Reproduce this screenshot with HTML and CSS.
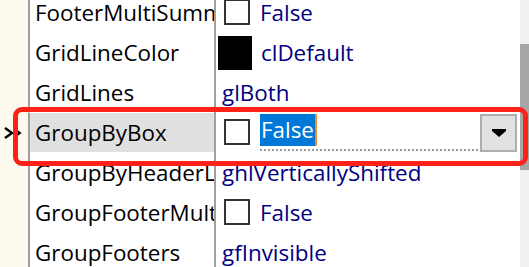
FILE: index.html
```html
<!DOCTYPE html>
<html>
<head>
<meta charset="utf-8">
<link rel="stylesheet" href="styles.css">
</head>
<body>
<div class="inspector">
  <div class="grid">
    <div class="row">
      <div class="gutter"></div>
      <div class="name"><span class="label">FooterMultiSummaries</span></div>
      <div class="value"><span class="check"></span><span class="text">False</span></div>
    </div>
    <div class="row">
      <div class="gutter"></div>
      <div class="name"><span class="label">GridLineColor</span></div>
      <div class="value"><span class="swatch"></span><span class="text">clDefault</span></div>
    </div>
    <div class="row">
      <div class="gutter"></div>
      <div class="name"><span class="label">GridLines</span></div>
      <div class="value"><span class="text plain">glBoth</span></div>
    </div>
    <div class="row selected">
      <div class="gutter">
        <svg class="indicator" width="20" height="12" viewBox="0 0 20 12"><path d="M2 1 L9 6 L2 11" fill="none" stroke="#000" stroke-width="2.4"/><path d="M9 6 H17" stroke="#000" stroke-width="2"/><path d="M13 3 L17 6 L13 9" fill="none" stroke="#000" stroke-width="2"/></svg>
      </div>
      <div class="name"><span class="label">GroupByBox</span></div>
      <div class="value edit">
        <span class="check"></span>
        <div class="editor">
          <span class="sel">False</span><span class="caret"></span>
        </div>
        <div class="dropbtn"><svg width="14" height="8" viewBox="0 0 14 8"><path d="M0 0 H14 V2 L7 8 L0 2 Z" fill="#000"/></svg></div>
      </div>
    </div>
    <div class="row">
      <div class="gutter"></div>
      <div class="name"><span class="label">GroupByHeaderLayout</span></div>
      <div class="value"><span class="text plain">ghlVerticallyShifted</span></div>
    </div>
    <div class="row">
      <div class="gutter"></div>
      <div class="name"><span class="label">GroupFooterMultiSummaries</span></div>
      <div class="value"><span class="check"></span><span class="text">False</span></div>
    </div>
    <div class="row">
      <div class="gutter"></div>
      <div class="name"><span class="label">GroupFooters</span></div>
      <div class="value"><span class="text plain">gfInvisible</span></div>
    </div>
  </div>
  <div class="scrollbar"><div class="thumb"></div></div>
</div>
<div class="focus-ring"></div>
</body>
</html>
```
FILE: styles.css
```css
html, body {
  margin: 0;
  padding: 0;
  background: #ffffff;
}
body {
  width: 529px;
  height: 267px;
  overflow: hidden;
  position: relative;
  font-family: "Open Sans", "Noto Sans", sans-serif;
  font-size: 22.4px;
}
.inspector {
  display: flex;
  height: 267px;
  overflow: hidden;
}
.grid {
  flex: 0 0 520px;
  display: flex;
  flex-direction: column;
  margin-top: -8px;
  background: linear-gradient(to right, #fdf9ef 0 28px, #ffffff 28px);
}
.row {
  display: flex;
  height: 40px;
  flex: 0 0 40px;
}
.gutter {
  flex: 0 0 28px;
  background: #fdf9ef;
  display: flex;
  align-items: center;
}
.name {
  flex: 0 0 186px;
  border-left: 2px solid #a0a0a0;
  padding-left: 5px;
  box-sizing: border-box;
  color: #000;
  white-space: nowrap;
  overflow: hidden;
  display: flex;
  align-items: center;
}
.label {
  display: block;
  overflow: hidden;
  max-width: 179px;
}
.selected .name {
  background: #e0e0e0;
  background-clip: padding-box;
  border-top: 1px solid transparent;
}
.value {
  flex: 1;
  border-left: 2px solid #a0a0a0;
  display: flex;
  align-items: center;
  color: #000080;
  white-space: nowrap;
  overflow: hidden;
}
.check {
  flex: 0 0 auto;
  width: 22px;
  height: 22px;
  border: 2px solid #333333;
  margin-left: 8px;
  margin-right: 10px;
}
.swatch {
  flex: 0 0 auto;
  width: 34px;
  height: 34px;
  background: #000;
  margin-left: 2px;
  margin-right: 9px;
  margin-top: 2px;
}
.text.plain {
  margin-left: 6px;
}
.indicator {
  margin-left: 3px;
  margin-top: 2px;
}
.editor {
  flex: 0 0 218px;
  align-self: stretch;
  margin-top: 2px;
  margin-bottom: 1px;
  display: flex;
  align-items: flex-start;
  border-bottom: 2px dotted #9a9a9a;
  box-sizing: border-box;
}
.sel {
  background: #0078d7;
  color: #ffffff;
  height: 32px;
  line-height: 32px;
  padding: 0 1px;
}
.caret {
  width: 2px;
  height: 32px;
  background: #f08a24;
}
.dropbtn {
  flex: 0 0 auto;
  width: 33px;
  height: 34px;
  margin-left: 2px;
  margin-top: 2px;
  background: #e1e1e1;
  border: 2px solid #adadad;
  display: flex;
  align-items: center;
  justify-content: center;
}
.scrollbar {
  flex: 0 0 9px;
  background: #f0f0f0;
  display: flex;
  flex-direction: column;
}
.thumb {
  margin-top: 44px;
  height: 126px;
  background: #a6a6a6;
}
.focus-ring {
  position: absolute;
  left: 13px;
  top: 107px;
  width: 505px;
  height: 49px;
  border: 5px solid #fd2117;
  border-radius: 9px;
}
```
